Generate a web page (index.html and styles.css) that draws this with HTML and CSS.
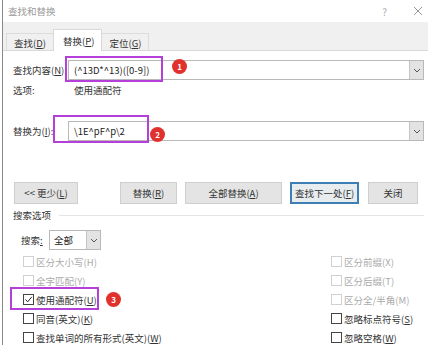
FILE: index.html
```html
<!DOCTYPE html>
<html lang="zh-CN">
  <head>
    <meta charset="UTF-8" />
    <title>查找和替换</title>
    <link rel="stylesheet" href="styles.css">
  </head>
  <body>
    <div class="dialog">
      <div class="titlebar">
        <span class="title">查找和替换</span>
        <span class="help">?</span>
        <svg class="close" width="10" height="10" viewBox="0 0 10 10"><path d="M1 1L9 9M9 1L1 9" stroke="#999" stroke-width="1" fill="none"/></svg>
      </div>
      <div class="tabstrip">
        <div class="tab tab-first">查找(<u>D</u>)</div>
        <div class="tab tab-active">替换(<u>P</u>)</div>
        <div class="tab">定位(<u>G</u>)</div>
      </div>
      <div class="panel">
        <div class="field-row row-find">
          <label class="field-label">查找内容(<u>N</u>):</label>
          <div class="combo">
            <span class="combo-text">(^13D*^13)([0-9])</span>
            <span class="drop"><svg width="8" height="5" viewBox="0 0 8 5"><path d="M1 1L4 4L7 1" stroke="#555" fill="none"/></svg></span>
            <div class="mark mark-find"></div>
            <div class="badge badge-1">1</div>
          </div>
        </div>
        <div class="option-row">
          <span class="option-label">选项:</span>
          <span>使用通配符</span>
        </div>
        <div class="field-row row-replace">
          <label class="field-label">替换为(<u>I</u>):</label>
          <div class="combo">
            <span class="combo-text">\1E^pF^p\2</span>
            <span class="drop"><svg width="8" height="5" viewBox="0 0 8 5"><path d="M1 1L4 4L7 1" stroke="#555" fill="none"/></svg></span>
            <div class="mark mark-replace"></div>
            <div class="badge badge-2">2</div>
          </div>
        </div>
        <div class="buttons">
          <button class="btn btn-less">&lt;&lt; 更少(<u>L</u>)</button>
          <button class="btn btn-replace">替换(<u>R</u>)</button>
          <button class="btn btn-all">全部替换(<u>A</u>)</button>
          <button class="btn btn-next">查找下一处(<u>F</u>)</button>
          <button class="btn btn-close">关闭</button>
        </div>
        <div class="section">
          <span>搜索选项</span>
          <span class="section-line"></span>
        </div>
        <div class="search-row">
          <span class="search-label">搜索<u>:</u></span>
          <div class="select">
            <span class="select-text">全部</span>
            <span class="drop"><svg width="8" height="5" viewBox="0 0 8 5"><path d="M1 1L4 4L7 1" stroke="#555" fill="none"/></svg></span>
          </div>
        </div>
        <div class="checks">
          <div class="check disabled"><span class="box"></span>区分大小写(H)</div>
          <div class="check disabled"><span class="box"></span>区分前缀(X)</div>
          <div class="check disabled"><span class="box"></span>全字匹配(Y)</div>
          <div class="check disabled"><span class="box"></span>区分后缀(T)</div>
          <div class="check">
            <span class="box"><svg width="9" height="9" viewBox="0 0 9 9"><path d="M1.5 4.5L3.7 6.8L7.8 1.8" stroke="#222" stroke-width="1" fill="none"/></svg></span>使用通配符(<u>U</u>)
            <div class="mark mark-wild"></div>
            <div class="badge badge-3">3</div>
          </div>
          <div class="check disabled"><span class="box"></span>区分全/半角(M)</div>
          <div class="check"><span class="box"></span>同音(英文)(<u>K</u>)</div>
          <div class="check"><span class="box"></span>忽略标点符号(<u>S</u>)</div>
          <div class="check"><span class="box"></span>查找单词的所有形式(英文)(<u>W</u>)</div>
          <div class="check"><span class="box"></span>忽略空格(<u>W</u>)</div>
        </div>
      </div>
    </div>
  </body>
</html>
```
FILE: styles.css
```css
body {
  margin: 0;
  padding: 0;
  width: 428px;
  height: 345px;
  overflow: hidden;
  background: #fff;
  font-family: "Noto Sans CJK SC", "Noto Sans", sans-serif;
  font-size: 9.5px;
  color: #333;
}
u {
  text-decoration: underline;
}
.dialog {
  height: 345px;
  border-left: 1px solid #8a8a8a;
  margin-left: 2px;
}
.titlebar {
  height: 22px;
  display: flex;
  align-items: center;
  padding-left: 5px;
}
.title {
  color: #999;
  flex: 1;
}
.help {
  color: #aaa;
  font-size: 10px;
  margin-right: 26px;
}
.close {
  margin-right: 5px;
}
.tabstrip {
  height: 28px;
  background: #f0f0f0;
  border-bottom: 1px solid #d9d9d9;
  display: flex;
  align-items: flex-end;
  padding-left: 3px;
}
.tab {
  height: 17px;
  padding: 0 7px;
  display: flex;
  align-items: center;
  border: 1px solid #dcdcdc;
  border-bottom: none;
  margin-bottom: -1px;
}
.tab-first {
  border-right: none;
}
.tab-active {
  height: 21px;
  background: #fff;
  padding: 0 7px 0 9px;
  border-color: #d9d9d9;
}
.tab-active + .tab {
  border-left: none;
}
.panel {
  padding: 0 4px 0 10px;
}
.field-row {
  display: flex;
  align-items: center;
  height: 20px;
}
.row-find {
  margin-top: 9px;
}
.row-replace {
  margin-top: 21px;
}
.field-label {
  width: 55px;
}
.combo {
  position: relative;
  flex: 1;
  height: 18px;
  border: 1px solid #b8b8b8;
  display: flex;
  align-items: center;
}
.combo-text {
  flex: 1;
  padding-left: 5px;
  color: #222;
}
.drop {
  width: 13px;
  height: 100%;
  background: #e3e3e3;
  border-left: 1px solid #c4c4c4;
  display: flex;
  align-items: center;
  justify-content: center;
}
.mark {
  position: absolute;
  border: 2px solid #b540d9;
  box-sizing: border-box;
}
.mark-find {
  left: -4px;
  top: -5px;
  width: 98px;
  height: 26px;
}
.mark-replace {
  left: -16px;
  top: -7px;
  width: 96px;
  height: 28px;
}
.mark-wild {
  left: -13px;
  top: -3px;
  width: 89px;
  height: 23px;
}
.badge {
  position: absolute;
  width: 15px;
  height: 15px;
  border-radius: 50%;
  background: #e0312c;
  color: #fff;
  font-size: 8px;
  font-weight: bold;
  display: flex;
  align-items: center;
  justify-content: center;
}
.badge-1 {
  left: 103px;
  top: -2px;
}
.badge-2 {
  left: 81px;
  top: 5px;
}
.badge-3 {
  left: 83px;
  top: 2px;
}
.option-row {
  height: 20px;
  display: flex;
  align-items: center;
}
.option-label {
  width: 61px;
}
.buttons {
  display: flex;
  margin-top: 41px;
  padding-left: 1px;
  gap: 8px;
}
.btn {
  height: 22px;
  padding: 0;
  font-family: inherit;
  font-size: 9.5px;
  color: #333;
  background: #e4e4e4;
  border: 1px solid #cfcfcf;
}
.btn-less {
  width: 64px;
  margin-right: 34px;
}
.btn-replace {
  width: 57px;
}
.btn-all {
  width: 97px;
}
.btn-next {
  width: 69px;
  border: 2px solid #3d7fb5;
  background: #e7ecef;
}
.btn-close {
  width: 50px;
  margin-left: 1px;
}
.section {
  margin-top: 4px;
  height: 14px;
  display: flex;
  align-items: center;
}
.section-line {
  flex: 1;
  border-top: 1px solid #e4e4e4;
  margin-left: 8px;
}
.search-row {
  margin-top: 8px;
  height: 20px;
  display: flex;
  align-items: center;
  padding-left: 8px;
}
.search-label {
  width: 28px;
}
.select {
  width: 50px;
  height: 18px;
  border: 1px solid #b8b8b8;
  display: flex;
  align-items: center;
}
.select-text {
  flex: 1;
  padding-left: 4px;
  color: #222;
}
.checks {
  margin-top: 2px;
  padding-left: 10px;
  display: grid;
  grid-template-columns: 308px 1fr;
  grid-auto-rows: 19px;
}
.check {
  position: relative;
  display: flex;
  align-items: center;
}
.box {
  width: 9px;
  height: 9px;
  border: 1px solid #444;
  margin-right: 2px;
  display: flex;
  align-items: center;
  justify-content: center;
}
.check.disabled {
  color: #aaa;
}
.check.disabled .box {
  border-color: #d0d0d0;
}
```
